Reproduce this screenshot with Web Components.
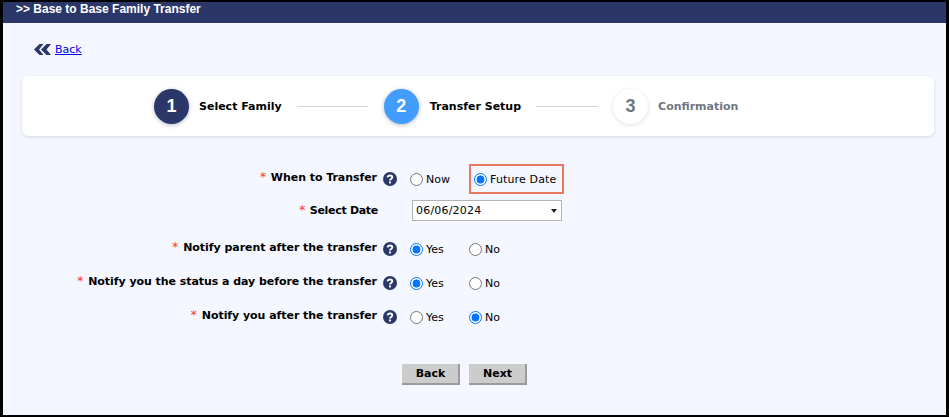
<!DOCTYPE html>
<html>
<head>
<meta charset="utf-8">
<title>Base to Base Family Transfer</title>
<style>
  html, body { margin: 0; padding: 0; background: #fff; }
</style>
</head>
<body>
<transfer-frame>
  <title-bar>&gt;&gt; Base to Base Family Transfer</title-bar>
  <back-link>Back</back-link>
  <step-card>
    <step-item num="1" state="done">Select Family</step-item>
    <step-line style="width:71px"></step-line>
    <step-item num="2" state="active">Transfer Setup</step-item>
    <step-line style="width:62px"></step-line>
    <step-item num="3">Confirmation</step-item>
  </step-card>
  <transfer-form>
    <form-row label="When to Transfer" help>
      <radio-option name="when">Now</radio-option>
      <radio-option name="when" checked boxed>Future Date</radio-option>
    </form-row>
    <form-row label="Select Date" tight>
      <date-select value="06/06/2024"></date-select>
    </form-row>
    <form-row label="Notify parent after the transfer" help style="margin-top:6px">
      <radio-option name="parent" checked>Yes</radio-option>
      <radio-option name="parent">No</radio-option>
    </form-row>
    <form-row label="Notify you the status a day before the transfer" help style="margin-top:2px">
      <radio-option name="status" checked>Yes</radio-option>
      <radio-option name="status">No</radio-option>
    </form-row>
    <form-row label="Notify you after the transfer" help style="margin-top:2px">
      <radio-option name="after">Yes</radio-option>
      <radio-option name="after" checked>No</radio-option>
    </form-row>
  </transfer-form>
  <button-bar>
    <action-button>Back</action-button>
    <action-button>Next</action-button>
  </button-bar>
</transfer-frame>

<script>
const FONT = '"DejaVu Sans", Verdana, sans-serif';

class TransferFrame extends HTMLElement {
  constructor() {
    super();
    this.attachShadow({ mode: "open" }).innerHTML = `
    <style>
      :host {
        display: block;
        box-sizing: border-box;
        width: 949px;
        height: 417px;
        overflow: hidden;
        border: solid #000;
        border-width: 2px 3px 2px 3px;
        background: #f4f7ff;
        font-family: ${FONT};
      }
    </style>
    <slot></slot>`;
  }
}

class TitleBar extends HTMLElement {
  constructor() {
    super();
    this.attachShadow({ mode: "open" }).innerHTML = `
    <style>
      :host {
        display: block;
        height: 21px;
        padding-left: 13px;
        background: #2b3768;
        color: #fff;
        font: bold 12px/14px "Liberation Sans", Arial, sans-serif;
      }
    </style>
    <slot></slot>`;
  }
}

class BackLink extends HTMLElement {
  constructor() {
    super();
    this.attachShadow({ mode: "open" }).innerHTML = `
    <style>
      :host {
        display: flex;
        align-items: center;
        gap: 4px;
        height: 18px;
        margin: 17px 0 0 31px;
        font-size: 11px;
      }
      a { color: #00e; text-decoration: underline; }
      svg { display: block; }
    </style>
    <svg width="17" height="11" viewBox="0 0 17 11">
      <path d="M5.500 0h4L5 5.500 9.500 11h-4L0 5.500zM12.500 0h4.500L12.500 5.500 17 11h-4.500L7 5.500z" fill="#2b3768"/>
    </svg>
    <a href="#"><slot></slot></a>`;
  }
}

class StepCard extends HTMLElement {
  constructor() {
    super();
    this.attachShadow({ mode: "open" }).innerHTML = `
    <style>
      :host {
        display: flex;
        align-items: center;
        box-sizing: border-box;
        width: 912px;
        height: 60px;
        margin: 18px 0 0 19px;
        padding-left: 132px;
        background: #fff;
        border-radius: 6px;
        box-shadow: 0 1px 3px rgba(60, 70, 120, .18);
      }
    </style>
    <slot></slot>`;
  }
}

class StepItem extends HTMLElement {
  constructor() {
    super();
    const state = this.getAttribute("state") || "todo";
    const colors = {
      done: ["#2b3768", "#fff", "#000", ".35"],
      active: ["#439cff", "#fff", "#000", ".35"],
      todo: ["#fff", "#6f7782", "#6f7782", ".16"],
    }[state];
    const active = state === "active";
    this.attachShadow({ mode: "open" }).innerHTML = `
    <style>
      :host {
        display: flex;
        align-items: center;
        gap: ${active ? 11 : 10}px;
        font-size: 11px;
        font-weight: bold;
        color: ${colors[2]};
        margin-left: ${active ? 1 : 0}px;
      }
      .num {
        display: flex;
        align-items: center;
        justify-content: center;
        width: 35px;
        height: 35px;
        border-radius: 50%;
        background: ${colors[0]};
        color: ${colors[1]};
        font: bold 18px "Liberation Sans", Arial, sans-serif;
        box-shadow: 0 1px 4px rgba(50, 60, 100, ${colors[3]});
      }
    </style>
    <span class="num">${this.getAttribute("num")}</span>
    <span><slot></slot></span>`;
  }
}

class StepLine extends HTMLElement {
  constructor() {
    super();
    this.attachShadow({ mode: "open" }).innerHTML = `
    <style>
      :host {
        display: block;
        height: 1px;
        margin: 0 15px;
        background: #d6d6d6;
      }
    </style>`;
  }
}

class TransferForm extends HTMLElement {
  constructor() {
    super();
    this.attachShadow({ mode: "open" }).innerHTML = `
    <style>
      :host { display: block; margin-top: 27px; }
    </style>
    <slot></slot>`;
  }
}

class FormRow extends HTMLElement {
  constructor() {
    super();
    const help = this.hasAttribute("help");
    const tight = this.hasAttribute("tight");
    this.attachShadow({ mode: "open" }).innerHTML = `
    <style>
      :host {
        display: grid;
        grid-template-columns: 374px 14px 1fr;
        column-gap: 5px;
        align-items: center;
        height: 32px;
        font-size: 11px;
        color: #000;
      }
      .label {
        text-align: right;
        font-weight: bold;
        white-space: nowrap;
        margin-top: -4px;
        letter-spacing: ${tight ? "-0.3px" : "-0.05px"};
        ${tight ? "margin-right: -1px; margin-top: -2px;" : ""}
      }
      .star { color: #f4402c; font-weight: normal; font-size: 13px; line-height: 1; margin-right: 1px; }
      .help { margin-left: 1px; }
      .fields { display: flex; align-items: center; margin-left: 9px; }
    </style>
    <div class="label"><span class="star">*</span> ${this.getAttribute("label")}</div>
    <div class="help">${help ? "<help-icon></help-icon>" : ""}</div>
    <div class="fields"><slot></slot></div>`;
  }
}

class HelpIcon extends HTMLElement {
  constructor() {
    super();
    this.attachShadow({ mode: "open" }).innerHTML = `
    <style>
      :host { display: block; width: 14px; height: 14px; }
      svg { display: block; }
    </style>
    <svg width="14" height="14" viewBox="0 0 14 14">
      <circle cx="7" cy="7" r="7" fill="#2b3768"/>
      <path d="M4.600 5.300C4.800 4.100 5.800 3.500 7 3.500c1.300 0 2.300.7 2.300 1.800 0 1.700-2.300 1.600-2.300 3.200" fill="none" stroke="#fff" stroke-width="1.900"/>
      <rect x="6" y="9.500" width="2" height="1.900" fill="#fff"/>
    </svg>`;
  }
}

class RadioOption extends HTMLElement {
  constructor() {
    super();
    const boxed = this.hasAttribute("boxed");
    const checked = this.hasAttribute("checked") ? "checked" : "";
    this.attachShadow({ mode: "open" }).innerHTML = `
    <style>
      :host {
        display: inline-flex;
        align-items: center;
        box-sizing: border-box;
        ${boxed ? "width: 95px; height: 30px; padding-left: 3px; border: 2px solid #e8795f; letter-spacing: .15px;" : "width: 59px;"}
        font-size: 11px;
      }
      input { width: 13px; height: 13px; margin: 0 3px 0 0; accent-color: #0075ff; }
    </style>
    <input type="radio" name="${this.getAttribute("name")}" ${checked}>
    <span><slot></slot></span>`;
  }
}

class DateSelect extends HTMLElement {
  constructor() {
    super();
    const value = this.getAttribute("value");
    this.attachShadow({ mode: "open" }).innerHTML = `
    <style>
      :host { display: block; position: relative; margin: -1px 0 0 2px; }
      select {
        display: block;
        box-sizing: border-box;
        width: 150px;
        height: 21px;
        padding: 0 0 0 3px;
        border: 1px solid #b4b4b4;
        border-radius: 0;
        background: #fff;
        color: #000;
        font: 11px ${FONT};
        letter-spacing: .2px;
        appearance: none;
      }
      .arrow {
        position: absolute;
        top: 9px;
        right: 5px;
        border: solid transparent;
        border-width: 4px 3.500px 0;
        border-top-color: #222;
        pointer-events: none;
      }
    </style>
    <select><option>${value}</option></select>
    <span class="arrow"></span>`;
  }
}

class ButtonBar extends HTMLElement {
  constructor() {
    super();
    this.attachShadow({ mode: "open" }).innerHTML = `
    <style>
      :host {
        display: flex;
        gap: 9px;
        margin: 31px 0 0 399px;
      }
    </style>
    <slot></slot>`;
  }
}

class ActionButton extends HTMLElement {
  constructor() {
    super();
    this.attachShadow({ mode: "open" }).innerHTML = `
    <style>
      :host { display: block; }
      button {
        display: block;
        box-sizing: border-box;
        width: 58px;
        height: 21px;
        padding: 0 0 0 1px;
        border: solid #9b9b9b;
        border-width: 0 2px 2px 0;
        background: #cccccc;
        color: #000;
        font: bold 11px ${FONT};
      }
    </style>
    <button type="button"><slot></slot></button>`;
  }
}

customElements.define("transfer-frame", TransferFrame);
customElements.define("title-bar", TitleBar);
customElements.define("back-link", BackLink);
customElements.define("step-card", StepCard);
customElements.define("step-item", StepItem);
customElements.define("step-line", StepLine);
customElements.define("transfer-form", TransferForm);
customElements.define("form-row", FormRow);
customElements.define("help-icon", HelpIcon);
customElements.define("radio-option", RadioOption);
customElements.define("date-select", DateSelect);
customElements.define("button-bar", ButtonBar);
customElements.define("action-button", ActionButton);
</script>
</body>
</html>
